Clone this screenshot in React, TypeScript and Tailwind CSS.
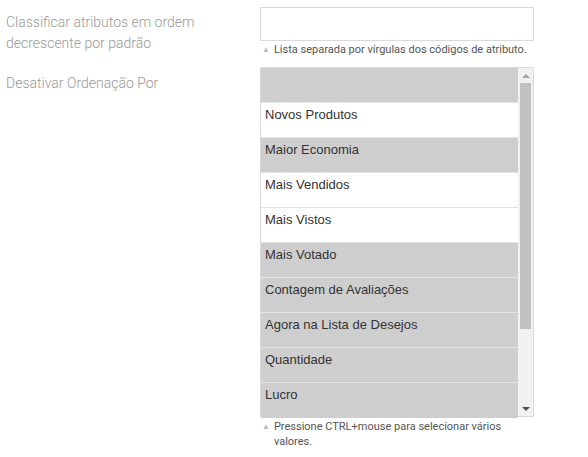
import React from 'react';

const options = [
  { label: '', selected: true },
  { label: 'Novos Produtos', selected: false },
  { label: 'Maior Economia', selected: true },
  { label: 'Mais Vendidos', selected: false },
  { label: 'Mais Vistos', selected: false },
  { label: 'Mais Votado', selected: true },
  { label: 'Contagem de Avaliações', selected: true },
  { label: 'Agora na Lista de Desejos', selected: true },
  { label: 'Quantidade', selected: true },
  { label: 'Lucro', selected: true },
];

function Hint({ children }: { children: React.ReactNode }) {
  return (
    <div className="flex items-start gap-[4px] pl-[2px] pt-[1px] text-[11px] leading-[15px] text-[#555] font-['Roboto',sans-serif]">
      <span className="text-[8px] text-[#bbb] leading-[15px]">▲</span>
      <span>{children}</span>
    </div>
  );
}

export default function App() {
  return (
    <div className="w-[588px] h-[457px] bg-white font-['Roboto',sans-serif] overflow-hidden">
      {/* row 1 */}
      <div className="flex pt-[7px]">
        <div className="w-[260px] pl-[6px] pt-[5px] pr-[60px] text-[14px] leading-[21px] font-light text-[#999]">
          Classificar atributos em ordem decrescente por padrão
        </div>
        <div className="w-[274px]">
          <div className="h-[34px] border border-[#dadada] bg-white" />
          <Hint>Lista separada por vírgulas dos códigos de atributo.</Hint>
        </div>
      </div>

      {/* row 2 */}
      <div className="flex pt-[10px]">
        <div className="w-[260px] pl-[6px] pt-[6px] text-[14px] leading-[21px] font-light text-[#999]">
          Desativar Ordenação Por
        </div>
        <div className="w-[274px]">
          <div className="flex h-[350px] border border-[#dadada] bg-white">
            <div className="flex-1 flex flex-col">
              {options.map((o, i) => (
                <div
                  key={i}
                  className={`h-[35px] shrink-0 px-[4px] pt-[3px] text-[13px] leading-[18px] text-[#333] font-['Liberation_Sans',Arial,sans-serif] ${
                    i < options.length - 1 ? 'border-b border-[#e3e3e3]' : ''
                  } ${o.selected ? 'bg-[#cecece]' : 'bg-white'}`}
                >
                  {o.label}
                </div>
              ))}
            </div>
            <div className="w-[15px] bg-[#f1f1f1] flex flex-col items-center">
              <div className="h-[15px] flex items-center justify-center">
                <svg width="8" height="4" viewBox="0 0 8 4">
                  <polygon points="0,4 8,4 4,0" fill="#a3a3a3" />
                </svg>
              </div>
              <div className="w-[11px] h-[246px] bg-[#c1c1c1]" />
              <div className="flex-1" />
              <div className="h-[15px] flex items-center justify-center">
                <svg width="8" height="4" viewBox="0 0 8 4">
                  <polygon points="0,0 8,0 4,4" fill="#505050" />
                </svg>
              </div>
            </div>
          </div>
          <div className="pt-[1px] w-[250px]">
            <Hint>Pressione CTRL+mouse para selecionar vários valores.</Hint>
          </div>
        </div>
      </div>
    </div>
  );
}
